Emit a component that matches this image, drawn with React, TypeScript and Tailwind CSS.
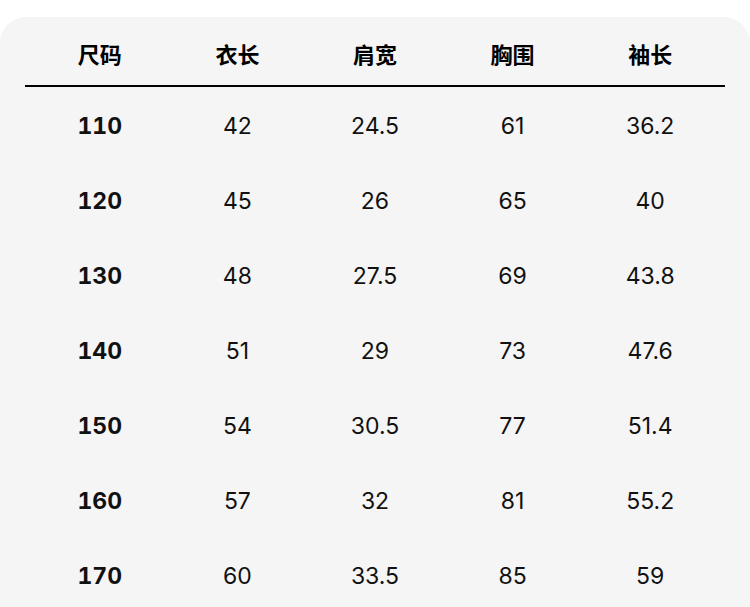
const headers = ['尺码', '衣长', '肩宽', '胸围', '袖长'];

const rows = [
  ['110', '42', '24.5', '61', '36.2'],
  ['120', '45', '26', '65', '40'],
  ['130', '48', '27.5', '69', '43.8'],
  ['140', '51', '29', '73', '47.6'],
  ['150', '54', '30.5', '77', '51.4'],
  ['160', '57', '32', '81', '55.2'],
  ['170', '60', '33.5', '85', '59'],
];

export default function App() {
  return (
    <div
      className="w-[750px] h-[607px] overflow-hidden bg-white pt-[17px] text-[#111111]"
      style={{ fontFamily: 'Inter, "Noto Sans CJK SC", sans-serif' }}
    >
      <div className="h-[640px] rounded-t-[26px] bg-[#f5f5f5] px-[25px]">
        {/* header */}
        <div className="border-b-2 border-black pt-[20px] pb-[12px]">
          <div className="mx-[6px] grid grid-cols-5">
            {headers.map((h) => (
              <div key={h} className="text-center text-[22px] leading-[36px] font-bold text-black">
                {h}
              </div>
            ))}
          </div>
        </div>

        {/* rows */}
        <div className="mx-[6px] pt-[2px]">
          {rows.map((r) => (
            <div key={r[0]} className="grid h-[75px] grid-cols-5 items-center">
              {r.map((v, i) => (
                <div
                  key={i}
                  className={
                    i === 0
                      ? 'text-center text-[23px] font-bold tabular-nums'
                      : 'text-center text-[23px] font-normal'
                  }
                >
                  {v}
                </div>
              ))}
            </div>
          ))}
        </div>
      </div>
    </div>
  );
}
